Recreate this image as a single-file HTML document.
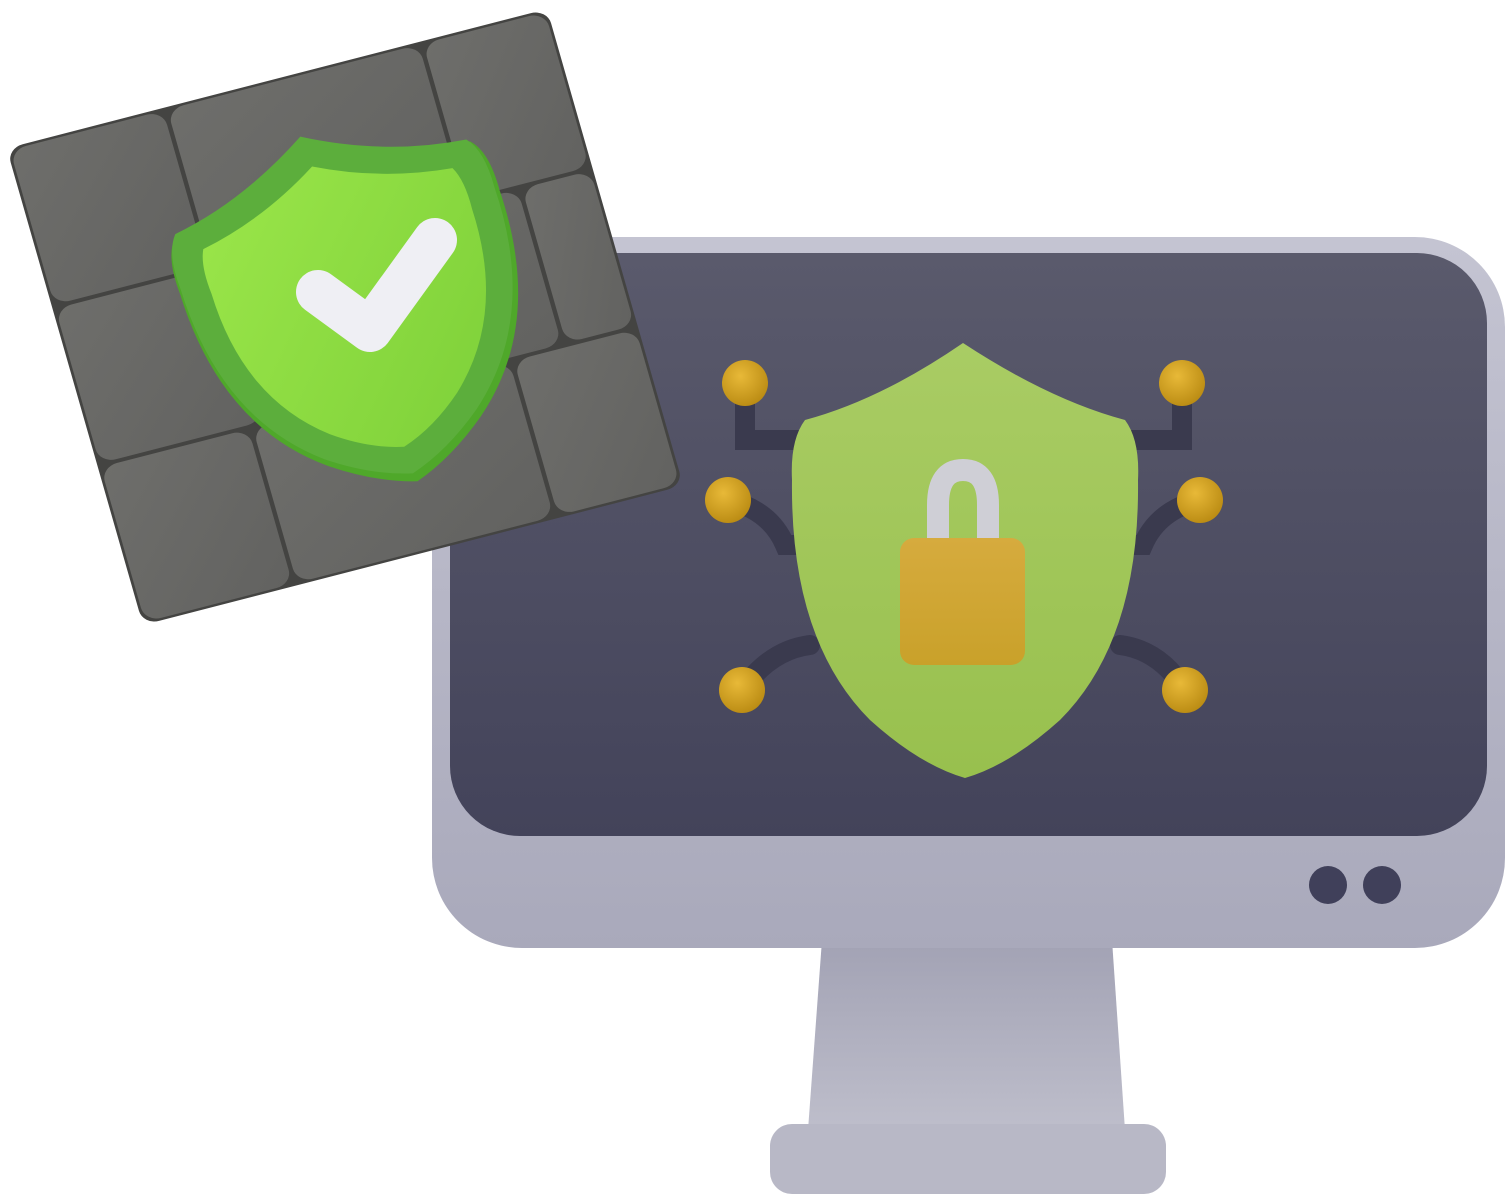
<!DOCTYPE html>
<html><head><style>html,body{margin:0;padding:0;background:#fff;width:1506px;height:1197px;overflow:hidden}</style></head>
<body>
<svg width="1506" height="1197" viewBox="0 0 1506 1197" xmlns="http://www.w3.org/2000/svg">
<defs>
<linearGradient id="scr" x1="0" y1="0" x2="0" y2="1"><stop offset="0" stop-color="#5a5a6c"/><stop offset="1" stop-color="#43435a"/></linearGradient>
<linearGradient id="frm" x1="0" y1="0" x2="0" y2="1"><stop offset="0" stop-color="#c4c4d2"/><stop offset="1" stop-color="#a9a9bb"/></linearGradient>
<linearGradient id="std" x1="0" y1="0" x2="0" y2="1"><stop offset="0" stop-color="#a2a2b4"/><stop offset="1" stop-color="#bebecb"/></linearGradient>
<linearGradient id="gs" x1="0" y1="0" x2="0" y2="1"><stop offset="0" stop-color="#a9cc64"/><stop offset="1" stop-color="#98c04e"/></linearGradient>
<linearGradient id="lk" x1="0" y1="0" x2="0" y2="1"><stop offset="0" stop-color="#d6ab3e"/><stop offset="1" stop-color="#c9a12a"/></linearGradient>
<radialGradient id="ball" cx="0.4" cy="0.35" r="0.7"><stop offset="0" stop-color="#e8b938"/><stop offset="1" stop-color="#b98a12"/></radialGradient>
<linearGradient id="gsh" x1="0" y1="0" x2="1" y2="1"><stop offset="0" stop-color="#9be64a"/><stop offset="1" stop-color="#7ccf38"/></linearGradient>
<linearGradient id="brk" x1="0" y1="0" x2="1" y2="1"><stop offset="0" stop-color="#6e6e6b"/><stop offset="1" stop-color="#626260"/></linearGradient>
</defs>
<!-- stand -->
<path d="M822 940 L1112 940 L1125 1130 L808 1130 Z" fill="url(#std)"/>
<rect x="770" y="1124" width="396" height="70" rx="22" fill="#b8b8c6"/>
<!-- monitor -->
<rect x="432" y="237" width="1073" height="711" rx="90" fill="url(#frm)"/>
<rect x="450" y="253" width="1037" height="583" rx="70" fill="url(#scr)"/>
<circle cx="1328" cy="885" r="19" fill="#40405a"/>
<circle cx="1382" cy="885" r="19" fill="#40405a"/>
<!-- circuits -->
<g fill="none" stroke="#3a3a4e" stroke-width="20" stroke-linecap="round">
<path d="M745 383 V440 H810"/><path d="M1182 383 V440 H1120"/>
<path d="M728 500 Q770 510 785 545 H810"/><path d="M1200 500 Q1158 510 1143 545 H1120"/>
<path d="M742 690 Q770 650 810 645"/><path d="M1185 690 Q1160 650 1120 645"/>
</g>
<g fill="url(#ball)">
<circle cx="745" cy="383" r="23"/><circle cx="1182" cy="383" r="23"/>
<circle cx="728" cy="500" r="23"/><circle cx="1200" cy="500" r="23"/>
<circle cx="742" cy="690" r="23"/><circle cx="1185" cy="690" r="23"/>
</g>
<!-- shield -->
<path d="M963 343 Q1050 400 1125 420 Q1140 440 1138 480 Q1140 640 1060 720 Q1010 765 965 778 Q920 765 870 720 Q790 640 792 480 Q790 440 805 420 Q880 400 963 343 Z" fill="url(#gs)"/>
<path d="M938 540 V505 Q938 470 963 470 Q988 470 988 505 V540" fill="none" stroke="#cfcfd6" stroke-width="22"/>
<rect x="900" y="538" width="125" height="127" rx="14" fill="url(#lk)"/>
<!-- wall -->
<g transform="matrix(5.35,-1.38,1.35,4.72,10,150)">
<rect x="-0.5" y="-0.5" width="101" height="101" rx="3" fill="#444442"/>
<g fill="url(#brk)">
<rect x="0" y="0" width="28.6" height="32.8" rx="3"/><rect x="29.4" y="0" width="47" height="32.8" rx="3"/><rect x="77.2" y="0" width="22.8" height="32.8" rx="3"/>
<rect x="0" y="33.6" width="30.6" height="32.8" rx="3"/><rect x="31.4" y="33.6" width="55" height="32.8" rx="3"/><rect x="87.2" y="33.6" width="12.8" height="32.8" rx="3"/>
<rect x="0" y="67.2" width="27.6" height="32.8" rx="3"/><rect x="28.4" y="67.2" width="48" height="32.8" rx="3"/><rect x="77.2" y="67.2" width="22.8" height="32.8" rx="3"/>
</g>
</g>
<!-- green shield -->
<g transform="rotate(-18 355 305)">
<path d="M355 130 Q430 175 515 185 Q530 200 528 240 Q530 380 440 450 Q400 480 360 492 Q320 480 280 450 Q190 380 192 240 Q190 200 205 185 Q280 175 355 130 Z" fill="#4fa82a"/>
<path d="M355 128 Q430 172 512 182 Q526 198 524 236 Q526 372 438 442 Q398 472 358 483 Q318 472 278 442 Q192 372 194 236 Q192 198 206 182 Q280 172 355 128 Z" fill="#5cae3c"/>
<path d="M357 160 Q420 195 490 205 Q498 220 496 250 Q496 360 425 420 Q392 446 358 455 Q324 446 291 420 Q220 360 222 250 Q220 220 228 205 Q295 195 357 160 Z" fill="url(#gsh)"/>
</g>
<path d="M318 292 L370 330 L435 240" fill="none" stroke="#efeff4" stroke-width="44" stroke-linecap="round" stroke-linejoin="round"/>
</svg>
</body></html>
